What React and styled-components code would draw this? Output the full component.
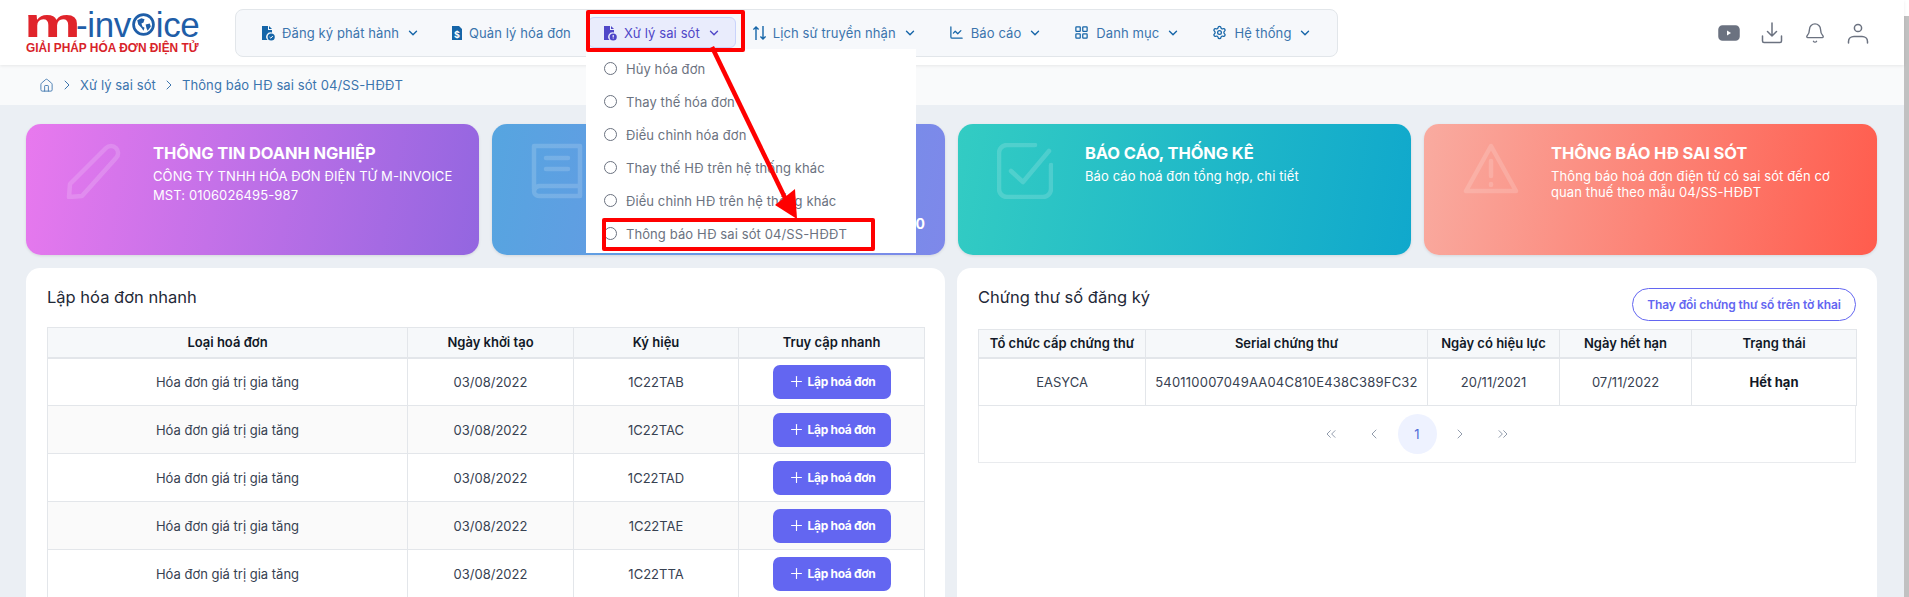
import React from 'react';
import styled, { createGlobalStyle } from 'styled-components';
import {
  ChevronDown,
  ChevronRight,
  ChevronLeft,
  ChevronsLeft,
  ChevronsRight,
  ChartLine,
  LayoutGrid,
  Settings,
  Home,
  Plus,
  Bell,
} from 'lucide-react';

const GlobalStyle = createGlobalStyle`
  html, body {
    margin: 0;
    padding: 0;
    overflow: hidden;
    background: #fff;
    font-family: Inter, "Noto Sans", sans-serif;
  }
  * { box-sizing: border-box; }
`;

const Page = styled.div`
  position: relative;
  height: 597px;
  overflow: hidden;
  padding-right: 5px;
  background: #fff;
`;

const ScrollThumb = styled.div`
  position: absolute;
  top: 16px;
  right: 0;
  bottom: 0;
  width: 5px;
  background: #c1c1c1;
`;

const TopBar = styled.header`
  display: flex;
  align-items: center;
  height: 65px;
  padding-left: 26px;
  padding-right: 35px;
  background: #fff;
  box-shadow: 0 1px 3px rgba(0, 0, 0, 0.08);
  position: relative;
  z-index: 2;
`;

const Logo = styled.div`
  width: 209px;
  flex-shrink: 0;
`;

const LogoWord = styled.div`
  display: flex;
  align-items: baseline;
  height: 25px;
  color: #1f5ea8;
  font-family: "Liberation Sans", Arial, sans-serif;
  font-size: 35px;
  line-height: 25px;
  letter-spacing: -0.4px;
`;

const LogoM = styled.span`
  display: inline-block;
  width: 50px;
  margin-left: -2px;
  margin-right: 2px;
  color: #e0242b;
  font-size: 41px;
  font-weight: 700;
  transform: scaleX(1.56);
  transform-origin: left bottom;
`;

const LogoGlobe = styled.svg`
  width: 23px;
  height: 23px;
  margin: 0 1px 0;
  align-self: flex-end;
`;

const LogoTag = styled.div`
  margin-top: 6px;
  color: #d8232a;
  font-family: "Liberation Sans", Arial, sans-serif;
  font-size: 11.9px;
  font-weight: 700;
  line-height: 12px;
  white-space: nowrap;
`;

const Nav = styled.nav`
  display: flex;
  align-items: center;
  gap: 2px;
  width: 1103px;
  height: 48px;
  padding-left: 10px;
  background: #f6f8fb;
  border: 1px solid #e2e6ea;
  border-radius: 8px;
`;

const NavItem = styled.div`
  position: relative;
  display: flex;
  align-items: center;
  gap: 7px;
  height: 31px;
  padding: 0 14px;
  color: ${(p) => (p.$active ? '#4f46c8' : '#3b74ad')};
  background: ${(p) => (p.$active ? '#e9ecfc' : 'transparent')};
  border: 1px solid ${(p) => (p.$active ? '#c9d3fb' : 'transparent')};
  border-radius: 6px;
  font-size: 13px;
  letter-spacing: 0.1px;
  white-space: nowrap;

  svg {
    flex-shrink: 0;
  }
`;

const NavIcon = styled.svg`
  width: ${(p) => p.$w || 14}px;
  height: 16px;
  color: ${(p) => (p.$active ? '#4f46c8' : '#1565a8')};
`;

const RedFrame = styled.div`
  position: absolute;
  top: -8px;
  left: -3px;
  right: -10px;
  bottom: -5px;
  border: 4px solid #ff0000;
  border-radius: 2px;
  z-index: 6;
`;

const Dropdown = styled.div`
  position: absolute;
  top: 31px;
  left: -3px;
  width: 330px;
  padding: 3px 0 3px;
  background: #fff;
  z-index: 5;
`;

const DropItem = styled.div`
  position: relative;
  display: flex;
  align-items: center;
  gap: 9px;
  height: 33px;
  padding-left: 18px;
  color: #6b7280;
  font-size: 13px;
  letter-spacing: 0.1px;
`;

const Radio = styled.span`
  width: 13px;
  height: 13px;
  border: 1.3px solid #6b7280;
  border-radius: 50%;
`;

const RedBox = styled.div`
  position: absolute;
  top: 1px;
  left: 16px;
  width: 273px;
  height: 33px;
  border: 4px solid #ff0000;
  border-radius: 2px;
`;

const Tools = styled.div`
  display: flex;
  align-items: center;
  gap: 21px;
  margin-left: auto;
  color: #6b7280;
`;

const Crumbs = styled.div`
  display: flex;
  align-items: center;
  gap: 5px;
  height: 40px;
  padding-left: 39px;
  background: #f9fafb;
  color: #3b74ad;
  font-size: 13px;
  letter-spacing: 0.1px;
`;

const Content = styled.main`
  padding: 19px 27px 0 26px;
  background: #ebeff4;
  height: 492px;
`;

const CardRow = styled.section`
  display: grid;
  grid-template-columns: repeat(4, 453px);
  gap: 13px;
`;

const Card = styled.article`
  display: flex;
  gap: 32px;
  height: 131px;
  padding: 19px 20px 23px 39px;
  border-radius: 15px;
  background: ${(p) => p.$bg};
  color: #fff;
  box-shadow: 0 1px 3px rgba(0, 0, 0, 0.1);
`;

const CardIcon = styled.svg`
  width: 56px;
  height: 56px;
  flex-shrink: 0;
  fill: none;
  stroke: rgba(255, 255, 255, 0.16);
  stroke-width: 4.5;
  stroke-linecap: round;
  stroke-linejoin: round;
`;

const CardBody = styled.div`
  display: flex;
  flex-direction: column;
  flex: 1;
  min-width: 0;
`;

const CardTitle = styled.h3`
  margin: 0 0 5px;
  font-size: 16.5px;
  font-weight: 700;
  line-height: 20px;
  letter-spacing: -0.1px;
`;

const CardText = styled.p`
  margin: 0 0 3px;
  font-size: 13px;
  line-height: 16px;
  letter-spacing: 0.1px;
`;

const CardStat = styled.b`
  margin-top: auto;
  align-self: flex-end;
  font-size: 14px;
  line-height: 16px;
`;

const Panels = styled.section`
  display: grid;
  grid-template-columns: 919px 920px;
  gap: 12px;
  margin-top: 13px;
`;

const Panel = styled.div`
  height: 400px;
  padding: 19px 21px;
  background: #fff;
  border-radius: 14px;
`;

const PanelHead = styled.div`
  display: flex;
  justify-content: space-between;
  align-items: flex-start;
  height: ${(p) => p.$h}px;
`;

const PanelTitle = styled.h2`
  margin: 0;
  font-size: 16.5px;
  font-weight: 400;
  line-height: 20px;
  color: #1f2937;
`;

const OutlineButton = styled.button`
  width: 224px;
  height: 33px;
  margin-top: 1px;
  padding: 0;
  background: #fff;
  border: 1px solid #6366f1;
  border-radius: 17px;
  color: #6366f1;
  font-family: inherit;
  font-size: 12px;
  font-weight: 600;
  letter-spacing: -0.1px;
`;

const Table = styled.table`
  width: 100%;
  table-layout: fixed;
  border-collapse: collapse;
  font-size: 13px;
`;

const Col = styled.col`
  width: ${(p) => p.$w}px;
`;

const Th = styled.th`
  height: ${(p) => p.$h || 30}px;
  padding: 0;
  background: #f6f8fa;
  border: 1px solid #e3e6ea;
  border-bottom-width: 2px;
  color: #111827;
  font-weight: 600;
  white-space: nowrap;
`;

const Row = styled.tr`
  &:nth-child(even) td {
    background: #fafafa;
  }
`;

const Td = styled.td`
  height: ${(p) => p.$h || 48}px;
  padding: 0;
  border: 1px solid #e3e6ea;
  color: ${(p) => (p.$strong ? '#111827' : '#374151')};
  font-weight: ${(p) => (p.$strong ? 700 : 400)};
  letter-spacing: ${(p) => (p.$mono ? '0.2px' : '0')};
  text-align: center;
  white-space: nowrap;
`;

const CreateButton = styled.button`
  display: inline-flex;
  align-items: center;
  justify-content: center;
  gap: 3px;
  width: 118px;
  height: 34px;
  padding: 0;
  vertical-align: middle;
  background: #6366f1;
  border: 0;
  border-radius: 7px;
  color: #fff;
  font-family: inherit;
  font-size: 12px;
  font-weight: 700;
  letter-spacing: -0.3px;
`;

const Pager = styled.div`
  display: flex;
  justify-content: center;
  align-items: center;
  gap: 4px;
  height: 57px;
  border: 1px solid #e9ebee;
  border-top: 0;
`;

const PageBtn = styled.span`
  display: flex;
  align-items: center;
  justify-content: center;
  width: 39px;
  height: 40px;
  border-radius: 50%;
  background: ${(p) => (p.$current ? '#eef2ff' : 'transparent')};
  color: ${(p) => (p.$current ? '#4f6bd8' : '#8a94a6')};
  font-size: 13px;
`;

const ArrowLayer = styled.svg`
  position: absolute;
  top: 0;
  left: 0;
  width: 1909px;
  height: 597px;
  pointer-events: none;
  z-index: 7;
`;

const FileCheck = () => (
  <NavIcon viewBox="0 0 14 16" fill="currentColor">
    <path d="M1 1h6v4h4v2.6A4.4 4.4 0 0 0 6.6 15H1z" />
    <path d="M8 1l3 3H8z" />
    <circle cx="10.2" cy="12" r="3.6" />
    <path d="M8.6 12l1.2 1.2 2-2.2" stroke="#fff" strokeWidth="1" fill="none" />
  </NavIcon>
);

const FileAlert = () => (
  <NavIcon $active viewBox="0 0 14 16" fill="currentColor">
    <path d="M1 1h6v4h4v2.6A4.4 4.4 0 0 0 6.6 15H1z" />
    <path d="M8 1l3 3H8z" />
    <circle cx="10.2" cy="12" r="3.6" />
    <path d="M10.2 10v2.4M10.2 13.4v.6" stroke="#fff" strokeWidth="1.1" fill="none" />
  </NavIcon>
);

const FileDollar = () => (
  <NavIcon $w={10} viewBox="0 0 10 16" fill="currentColor">
    <path d="M0 1h7l3 3v11H0z" />
    <text x="5" y="13" fontSize="9" fontWeight="700" textAnchor="middle" fill="#fff" fontFamily="Inter">$</text>
  </NavIcon>
);

const SortArrows = () => (
  <NavIcon $w={13} viewBox="0 0 13 16" fill="none" stroke="currentColor" strokeWidth="1.4">
    <path d="M3 15V2M.4 4.6L3 2l2.6 2.6M10 1v13M7.4 11.4L10 14l2.6-2.6" />
  </NavIcon>
);

const GrayIcon = styled.svg`
  width: 22px;
  height: 22px;
  fill: none;
  stroke: currentColor;
  stroke-width: 1.5;
  stroke-linecap: round;
  stroke-linejoin: round;
`;

const menu = [
  { icon: <FileCheck />, label: 'Đăng ký phát hành', caret: true },
  { icon: <FileDollar />, label: 'Quản lý hóa đơn' },
  { icon: <FileAlert />, label: 'Xử lý sai sót', caret: true, active: true },
  { icon: <SortArrows />, label: 'Lịch sử truyền nhận', caret: true },
  { icon: <ChartLine size={15} color="#1565a8" />, label: 'Báo cáo', caret: true },
  { icon: <LayoutGrid size={15} color="#1565a8" />, label: 'Danh mục', caret: true },
  { icon: <Settings size={15} color="#1565a8" />, label: 'Hệ thống', caret: true },
];

const errorItems = [
  'Hủy hóa đơn',
  'Thay thế hóa đơn',
  'Điều chỉnh hóa đơn',
  'Thay thế HĐ trên hệ thống khác',
  'Điều chỉnh HĐ trên hệ thống khác',
  'Thông báo HĐ sai sót 04/SS-HĐĐT',
];

const invoices = ['1C22TAB', '1C22TAC', '1C22TAD', '1C22TAE', '1C22TTA'];

const App = () => {
  return (
    <Page>
      <GlobalStyle />
      <TopBar>
        <Logo>
          <LogoWord>
            <LogoM>m</LogoM>
            <span>-inv</span>
            <LogoGlobe viewBox="0 0 22 22">
              <circle cx="11" cy="11" r="9.5" fill="#fff" stroke="#1f5ea8" strokeWidth="2.6" />
              <path d="M5 7l4-2 3 1-1 3-2 1 1 3 2 1-1 3-2-3-3-3zM13 11l4-1 1 3-3 4-1-2z" fill="#1f5ea8" />
            </LogoGlobe>
            <span>ice</span>
          </LogoWord>
          <LogoTag>GIẢI PHÁP HÓA ĐƠN ĐIỆN TỬ</LogoTag>
        </Logo>

        <Nav>
          {menu.map((item) => (
            <NavItem key={item.label} $active={item.active}>
              {item.icon}
              {item.label}
              {item.caret && <ChevronDown size={14} strokeWidth={2.4} color={item.active ? '#4f46c8' : '#1565a8'} />}
              {item.active && (
                <>
                  <RedFrame />
                  <Dropdown>
                    {errorItems.map((label, i) => (
                      <DropItem key={label}>
                        <Radio />
                        {label}
                        {i === errorItems.length - 1 && <RedBox />}
                      </DropItem>
                    ))}
                  </Dropdown>
                </>
              )}
            </NavItem>
          ))}
        </Nav>

        <Tools>
          <GrayIcon viewBox="0 0 22 22">
            <rect x="1" y="4" width="20" height="14" rx="3.5" fill="currentColor" />
            <path d="M9 8.5v5l4-2.5z" fill="#fff" stroke="none" />
          </GrayIcon>
          <GrayIcon viewBox="0 0 22 22">
            <path d="M11 1v13M6.5 9.5L11 14l4.5-4.5M1.5 14v5a1.5 1.5 0 0 0 1.5 1.5h16a1.5 1.5 0 0 0 1.5-1.5v-5" />
          </GrayIcon>
          <Bell size={22} strokeWidth={1.5} />
          <GrayIcon viewBox="0 0 22 22">
            <circle cx="11" cy="6" r="3.6" />
            <path d="M1.5 21v-1.5c0-3 2.5-5 5.5-5h8c3 0 5.5 2 5.5 5V21" />
          </GrayIcon>
        </Tools>
      </TopBar>

      <Crumbs>
        <Home size={15} strokeWidth={1.4} />
        <ChevronRight size={16} strokeWidth={1.5} />
        Xử lý sai sót
        <ChevronRight size={16} strokeWidth={1.5} />
        Thông báo HĐ sai sót 04/SS-HĐĐT
      </Crumbs>

      <Content>
        <CardRow>
          <Card $bg="linear-gradient(100deg, #e879ee 0%, #9366e0 100%)">
            <CardIcon viewBox="0 0 56 56">
              <path d="M4 54l1-13L41 5a7 7 0 0 1 10 0 7 7 0 0 1 0 10L17 53z" />
            </CardIcon>
            <CardBody>
              <CardTitle>THÔNG TIN DOANH NGHIỆP</CardTitle>
              <CardText>CÔNG TY TNHH HÓA ĐƠN ĐIỆN TỬ M-INVOICE</CardText>
              <CardText>MST: 0106026495-987</CardText>
            </CardBody>
          </Card>

          <Card $bg="linear-gradient(100deg, #56a5e0 0%, #7e88ea 100%)">
            <CardIcon viewBox="0 0 56 56">
              <path d="M3 46V3h46v50H8a5 5 0 0 1-5-5 6 6 0 0 1 5-5h41M15 15h22M15 26h22" />
            </CardIcon>
            <CardBody>
              <CardStat>0</CardStat>
            </CardBody>
          </Card>

          <Card $bg="linear-gradient(100deg, #33ccc3 0%, #10a8cc 100%)">
            <CardIcon viewBox="0 0 56 56">
              <path d="M38 2H10a8 8 0 0 0-8 8v36a8 8 0 0 0 8 8h36a8 8 0 0 0 8-8V22M14 28l12 11L52 8" />
            </CardIcon>
            <CardBody>
              <CardTitle>BÁO CÁO, THỐNG KÊ</CardTitle>
              <CardText>Báo cáo hoá đơn tổng hợp, chi tiết</CardText>
            </CardBody>
          </Card>

          <Card $bg="linear-gradient(100deg, #f9aba0 0%, #ff5c4d 100%)">
            <CardIcon viewBox="0 0 56 56">
              <path d="M28 3L3 48h50zM28 18v15M28 41v1" />
            </CardIcon>
            <CardBody>
              <CardTitle>THÔNG BÁO HĐ SAI SÓT</CardTitle>
              <CardText>
                Thông báo hoá đơn điện tử có sai sót đến cơ
                <br />
                quan thuế theo mẫu 04/SS-HĐĐT
              </CardText>
            </CardBody>
          </Card>
        </CardRow>

        <Panels>
          <Panel>
            <PanelHead $h={40}>
              <PanelTitle>Lập hóa đơn nhanh</PanelTitle>
            </PanelHead>
            <Table>
              <colgroup>
                <Col $w={360} />
                <Col $w={166} />
                <Col $w={165} />
                <Col $w={186} />
              </colgroup>
              <thead>
                <tr>
                  <Th>Loại hoá đơn</Th>
                  <Th>Ngày khởi tạo</Th>
                  <Th>Ký hiệu</Th>
                  <Th>Truy cập nhanh</Th>
                </tr>
              </thead>
              <tbody>
                {invoices.map((code) => (
                  <Row key={code}>
                    <Td>Hóa đơn giá trị gia tăng</Td>
                    <Td>03/08/2022</Td>
                    <Td>{code}</Td>
                    <Td>
                      <CreateButton>
                        <Plus size={17} strokeWidth={1.6} />
                        Lập hoá đơn
                      </CreateButton>
                    </Td>
                  </Row>
                ))}
              </tbody>
            </Table>
          </Panel>

          <Panel>
            <PanelHead $h={42}>
              <PanelTitle>Chứng thư số đăng ký</PanelTitle>
              <OutlineButton>Thay đổi chứng thư số trên tờ khai</OutlineButton>
            </PanelHead>
            <Table>
              <colgroup>
                <Col $w={167} />
                <Col $w={282} />
                <Col $w={132} />
                <Col $w={132} />
                <Col $w={165} />
              </colgroup>
              <thead>
                <tr>
                  <Th $h={28}>Tổ chức cấp chứng thư</Th>
                  <Th $h={28}>Serial chứng thư</Th>
                  <Th $h={28}>Ngày có hiệu lực</Th>
                  <Th $h={28}>Ngày hết hạn</Th>
                  <Th $h={28}>Trạng thái</Th>
                </tr>
              </thead>
              <tbody>
                <tr>
                  <Td>EASYCA</Td>
                  <Td $mono>540110007049AA04C810E438C389FC32</Td>
                  <Td>20/11/2021</Td>
                  <Td>07/11/2022</Td>
                  <Td $strong>Hết hạn</Td>
                </tr>
              </tbody>
            </Table>
            <Pager>
              <PageBtn><ChevronsLeft size={16} strokeWidth={1.4} /></PageBtn>
              <PageBtn><ChevronLeft size={16} strokeWidth={1.4} /></PageBtn>
              <PageBtn $current>1</PageBtn>
              <PageBtn><ChevronRight size={16} strokeWidth={1.4} /></PageBtn>
              <PageBtn><ChevronsRight size={16} strokeWidth={1.4} /></PageBtn>
            </Pager>
          </Panel>
        </Panels>
      </Content>

      <ArrowLayer viewBox="0 0 1909 597">
        <path d="M712 47L787 202" stroke="#ff0000" strokeWidth="4.5" fill="none" />
        <path d="M797 219L775 205L795 189z" fill="#ff0000" />
      </ArrowLayer>
      <ScrollThumb />
    </Page>
  );
};

export default App;
